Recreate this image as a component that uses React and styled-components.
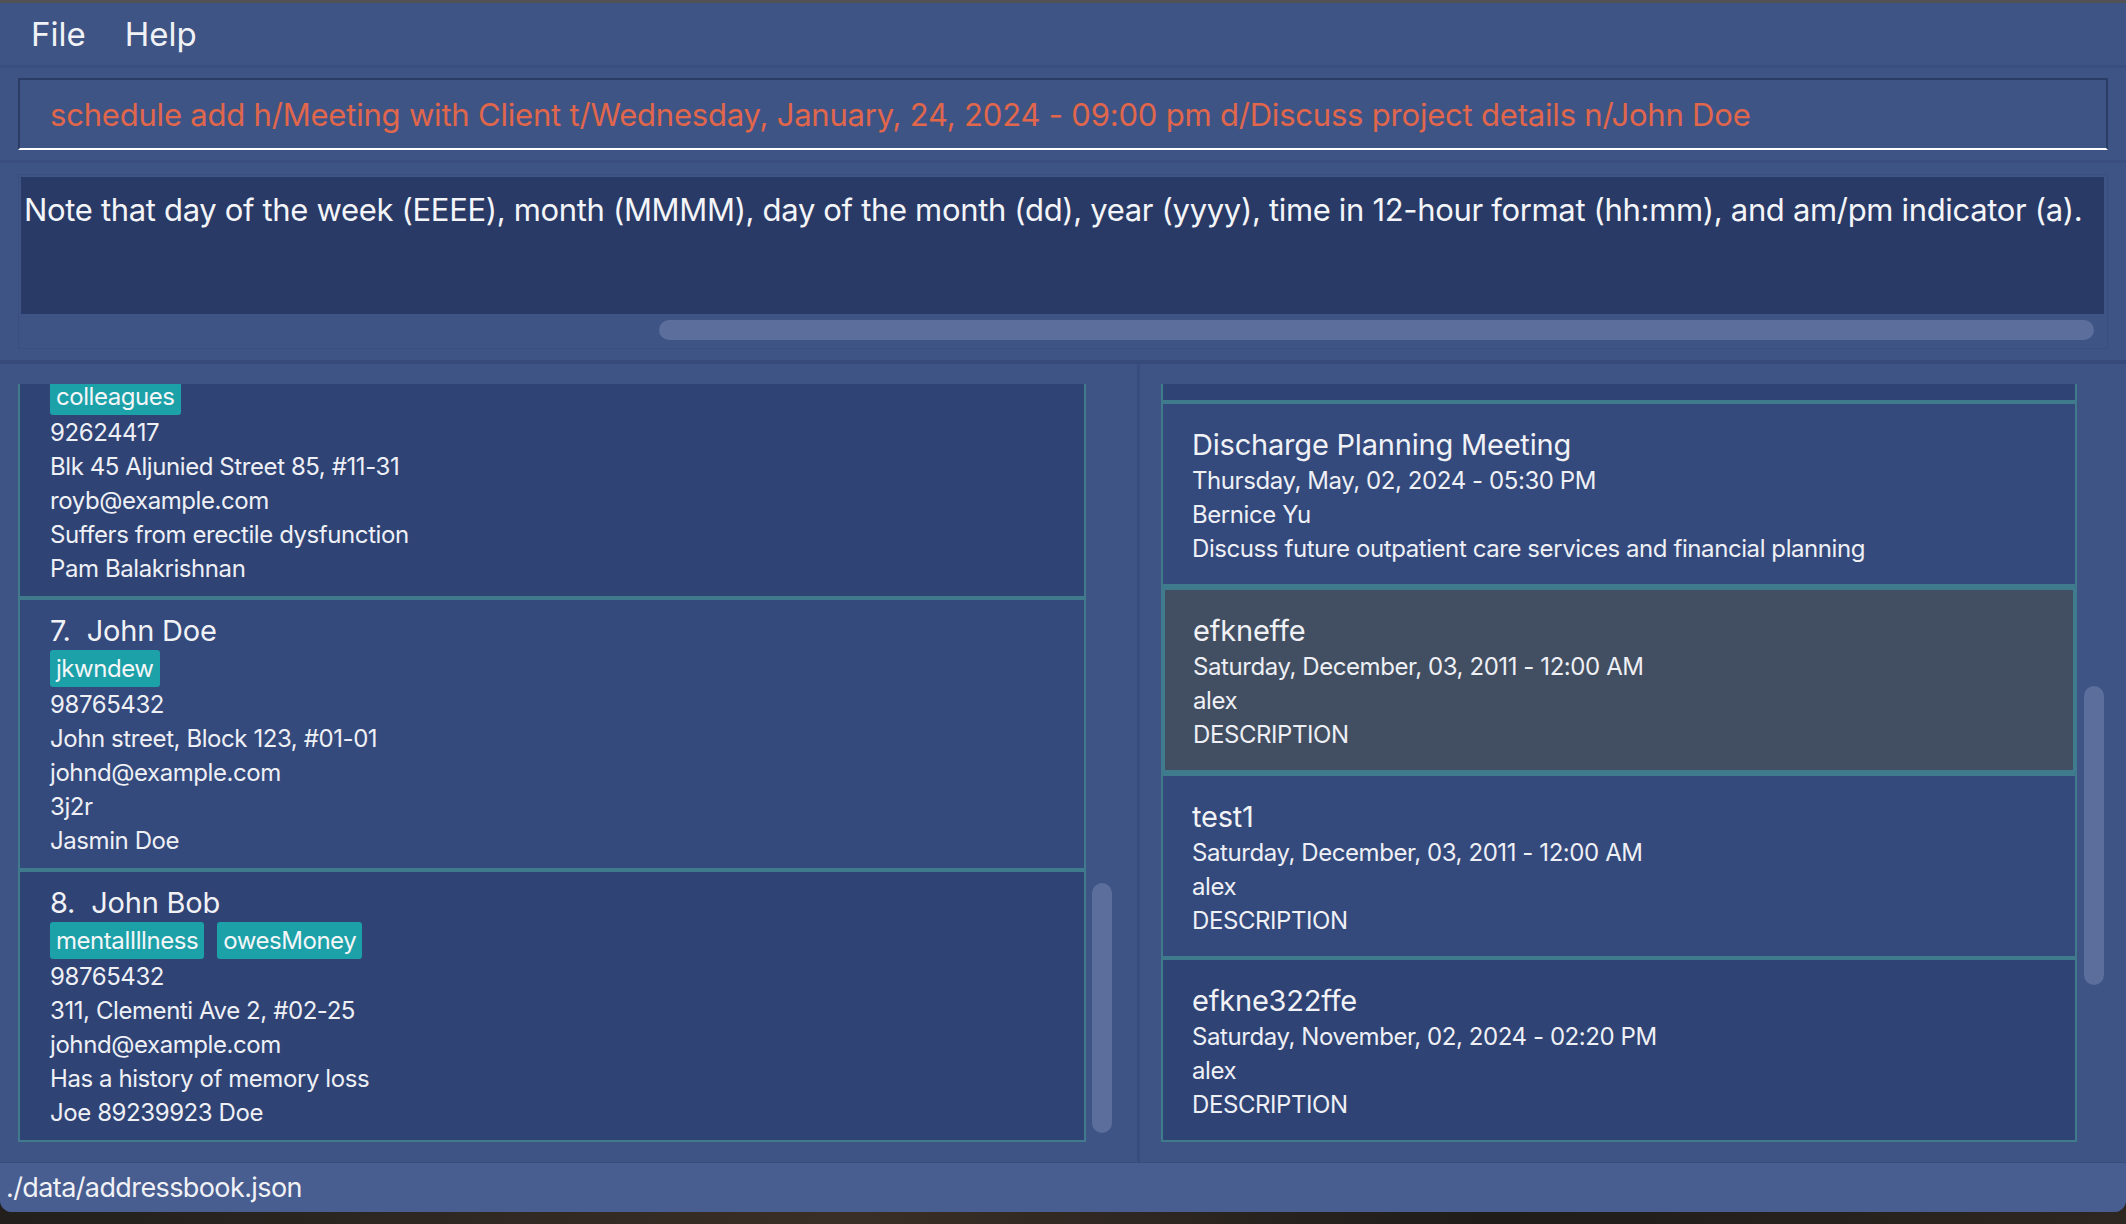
import React from "react";
import styled, { createGlobalStyle } from "styled-components";

const Global = createGlobalStyle`
  html, body { margin: 0; padding: 0; }
  body {
    background: #26221f;
    font-family: Inter, "Noto Sans", "Liberation Sans", sans-serif;
    width: 2126px;
    height: 1224px;
    overflow: hidden;
  }
  #root { width: 2126px; height: 1224px; }
`;

const Page = styled.div`
  width: 2126px;
  height: 1224px;
  display: flex;
  flex-direction: column;
  background: linear-gradient(90deg, #221f1c, #3a2f26 40%, #1f1c1a 70%, #2e2620);
`;

const Window = styled.div`
  height: 1212px;
  box-sizing: border-box;
  border-top: 3px solid #505256;
  background: #3e5485;
  border-radius: 0 0 12px 12px;
  overflow: hidden;
  display: flex;
  flex-direction: column;
  color: #eef0f6;
`;

const MenuBar = styled.div`
  height: 62px;
  display: flex;
  align-items: center;
  padding-left: 31px;
  gap: 39px;
  border-bottom: 3px solid #3a4f7f;
  flex-shrink: 0;
`;

const MenuItem = styled.span`
  font-size: 33px;
  line-height: 62px;
  color: #f1f2f6;
`;

const CommandSection = styled.div`
  padding: 10px 18px 10px 18px;
  border-bottom: 3px solid #3a4f7f;
  flex-shrink: 0;
`;

const CommandBox = styled.div`
  height: 72px;
  box-sizing: border-box;
  border: 2px solid #2b3c67;
  border-bottom: 2px solid #ffffff;
  display: flex;
  align-items: center;
  padding-left: 30px;
  font-size: 31px;
  color: #e0664c;
  white-space: nowrap;
  overflow: hidden;
  letter-spacing: -0.2px;
`;

const ResultSection = styled.div`
  padding: 11px 18px 11px 18px;
  border-bottom: 4px solid #374b7b;
  flex-shrink: 0;
`;

const ResultBox = styled.div`
  height: 175px;
  box-sizing: border-box;
  border: 1px solid #3a4f80;
  padding: 2px 3px 0 2px;
  display: flex;
  flex-direction: column;
`;

const ResultText = styled.div`
  height: 137px;
  background: #293a66;
  padding: 12px 0 0 3px;
  box-sizing: border-box;
  font-size: 31px;
  line-height: 42px;
  color: #f4f5f8;
  white-space: nowrap;
  overflow: hidden;
  letter-spacing: -0.33px;
`;

const HTrack = styled.div`
  flex: 1;
  display: flex;
  padding: 6px 10px 0 638px;
  box-sizing: border-box;
`;

const HThumb = styled.div`
  flex: 1;
  height: 20px;
  border-radius: 10px;
  background: #5b6e9c;
`;

const Lists = styled.div`
  flex: 1;
  display: flex;
  min-height: 0;
`;

const Panel = styled.div`
  width: ${(p) => p.$width}px;
  box-sizing: border-box;
  padding: 20px 0 20px ${(p) => p.$padLeft}px;
  display: flex;
  gap: ${(p) => p.$gap}px;
  flex-shrink: 0;
`;

const Divider = styled.div`
  width: 3px;
  background: #384d7d;
  flex-shrink: 0;
`;

const Viewport = styled.div`
  width: ${(p) => p.$width}px;
  height: 758px;
  overflow: hidden;
  flex-shrink: 0;
`;

const ListInner = styled.div`
  margin-top: ${(p) => -p.$offset}px;
  display: flex;
  flex-direction: column;
`;

const VTrack = styled.div`
  width: 20px;
  height: 758px;
  flex-shrink: 0;
`;

const VThumb = styled.div`
  margin-top: ${(p) => p.$top}px;
  height: ${(p) => p.$height}px;
  width: 20px;
  border-radius: 10px;
  background: #5b6e9c;
`;

const Card = styled.div`
  border: ${(p) => (p.$selected ? 4 : 2)}px solid #3f7b8c;
  background: ${(p) => (p.$selected ? "#424e61" : p.$alt ? "#34497c" : "#2f4375")};
  padding: ${(p) => p.$pad};
  display: flex;
  flex-direction: column;
  flex-shrink: 0;
  height: ${(p) => p.$h}px;
  box-sizing: border-box;
`;

const Title = styled.div`
  font-size: 29px;
  line-height: ${(p) => p.$lh || 38}px;
  color: #f1f2f6;
  white-space: pre;
  letter-spacing: -0.2px;
`;

const Line = styled.div`
  font-size: 24px;
  line-height: 34px;
  color: #eef0f5;
  white-space: nowrap;
  letter-spacing: -0.42px;
`;

const TagRow = styled.div`
  display: flex;
  gap: 13px;
  height: 38px;
  align-items: flex-start;
`;

const Tag = styled.span`
  background: #1ca1a9;
  color: #f4f6f8;
  font-size: 24px;
  line-height: 37px;
  height: 37px;
  padding: 0 6px;
  border-radius: 3px;
  letter-spacing: -0.45px;
`;

const StatusBar = styled.div`
  height: 50px;
  box-sizing: border-box;
  border-top: 1px solid #3a4e7e;
  background: #485d90;
  display: flex;
  align-items: center;
  padding-left: 6px;
  font-size: 27px;
  letter-spacing: -0.6px;
  color: #f1f2f6;
  flex-shrink: 0;
`;

const persons = [
  {
    n: 6,
    name: "Roy Balakrishnan",
    tags: ["colleagues"],
    phone: "92624417",
    addr: "Blk 45 Aljunied Street 85, #11-31",
    email: "royb@example.com",
    note: "Suffers from erectile dysfunction",
    kin: "Pam Balakrishnan",
  },
  {
    n: 7,
    name: "John Doe",
    tags: ["jkwndew"],
    phone: "98765432",
    addr: "John street, Block 123, #01-01",
    email: "johnd@example.com",
    note: "3j2r",
    kin: "Jasmin Doe",
  },
  {
    n: 8,
    name: "John Bob",
    tags: ["mentalIllness", "owesMoney"],
    phone: "98765432",
    addr: "311, Clementi Ave 2, #02-25",
    email: "johnd@example.com",
    note: "Has a history of memory loss",
    kin: "Joe 89239923 Doe",
  },
];

const appts = [
  {
    title: "Medication Review",
    date: "Monday, April, 15, 2024 - 10:00 AM",
    who: "Alex Yeoh",
    desc: "Review current prescriptions",
  },
  {
    title: "Discharge Planning Meeting",
    date: "Thursday, May, 02, 2024 - 05:30 PM",
    who: "Bernice Yu",
    desc: "Discuss future outpatient care services and financial planning",
  },
  {
    title: "efkneffe",
    date: "Saturday, December, 03, 2011 - 12:00 AM",
    who: "alex",
    desc: "DESCRIPTION",
    selected: true,
  },
  {
    title: "test1",
    date: "Saturday, December, 03, 2011 - 12:00 AM",
    who: "alex",
    desc: "DESCRIPTION",
  },
  {
    title: "efkne322ffe",
    date: "Saturday, November, 02, 2024 - 02:20 PM",
    who: "alex",
    desc: "DESCRIPTION",
  },
];

export default function App() {
  return (
    <>
      <Global />
      <Page>
        <Window>
          <MenuBar>
            <MenuItem>File</MenuItem>
            <MenuItem>Help</MenuItem>
          </MenuBar>
          <CommandSection>
            <CommandBox>
              schedule add h/Meeting with Client t/Wednesday, January, 24, 2024 - 09:00 pm d/Discuss project details n/John Doe
            </CommandBox>
          </CommandSection>
          <ResultSection>
            <ResultBox>
              <ResultText>
                Note that day of the week (EEEE), month (MMMM), day of the month (dd), year (yyyy), time in 12-hour format (hh:mm), and am/pm indicator (a).
              </ResultText>
              <HTrack>
                <HThumb />
              </HTrack>
            </ResultBox>
          </ResultSection>
          <Lists>
            <Panel $width={1137} $padLeft={18} $gap={6}>
              <Viewport $width={1068}>
                <ListInner $offset={58}>
                  {persons.map((p, i) => (
                    <Card key={p.n} $alt={i % 2 === 1} $pad="12px 29px 10px 30px" $h={272}>
                      <Title>{`${p.n}.  ${p.name}`}</Title>
                      <TagRow>
                        {p.tags.map((t) => (
                          <Tag key={t}>{t}</Tag>
                        ))}
                      </TagRow>
                      <Line>{p.phone}</Line>
                      <Line>{p.addr}</Line>
                      <Line>{p.email}</Line>
                      <Line>{p.note}</Line>
                      <Line>{p.kin}</Line>
                    </Card>
                  ))}
                </ListInner>
              </Viewport>
              <VTrack>
                <VThumb $top={499} $height={250} />
              </VTrack>
            </Panel>
            <Divider />
            <Panel $width={986} $padLeft={21} $gap={7}>
              <Viewport $width={916}>
                <ListInner $offset={166}>
                  {appts.map((a, i) => (
                    <Card
                      key={a.title}
                      $alt={i % 2 === 1}
                      $selected={a.selected}
                      $pad={a.selected ? "21px 28px 18px 28px" : "21px 29px 18px 29px"}
                      $h={a.selected ? 188 : 184}
                    >
                      <Title $lh={39}>{a.title}</Title>
                      <Line>{a.date}</Line>
                      <Line>{a.who}</Line>
                      <Line>{a.desc}</Line>
                    </Card>
                  ))}
                </ListInner>
              </Viewport>
              <VTrack>
                <VThumb $top={302} $height={299} />
              </VTrack>
            </Panel>
          </Lists>
          <StatusBar>./data/addressbook.json</StatusBar>
        </Window>
      </Page>
    </>
  );
}
